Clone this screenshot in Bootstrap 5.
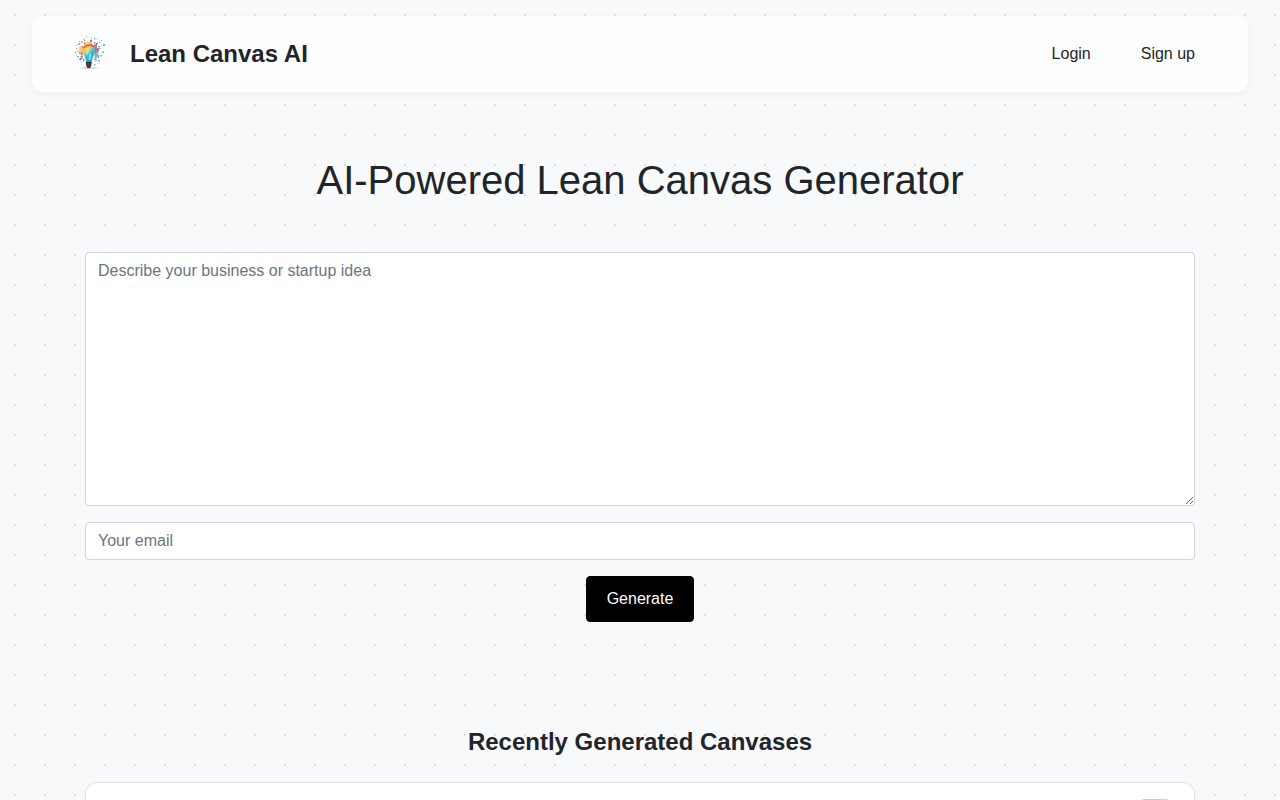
<!DOCTYPE html>
<html lang="en">
<head>
<meta charset="utf-8">
<meta name="viewport" content="width=device-width, initial-scale=1">
<title>Lean Canvas AI</title>
<link rel="stylesheet" href="https://cdn.jsdelivr.net/npm/bootstrap@5.3.0/dist/css/bootstrap.min.css">
<style>
  body {
    font-family: "Liberation Sans", Arial, sans-serif;
    background-color: #f8f9fb;
    background-image: radial-gradient(#dcdee1 1px, transparent 1px);
    background-size: 30px 30px;
    color: #212529;
  }
  .site-nav {
    margin: 16px 32px 0;
    padding: 18px 38px;
    background: #fefefe;
    border-radius: 12px;
    box-shadow: 0 2px 10px rgba(0, 0, 0, .04);
  }
  .brand-name { font-size: 24px; line-height: 36px; }
  .site-nav .nav-link { color: #212529; padding: 8px 15px; }
  .site-links { gap: 20px; }
  .page-wrap { --bs-gutter-x: 30px; }
  .hero-title { font-size: 40px; line-height: 48px; margin: 64px 0 48px; }
  .idea-form .form-control { border-color: #ced4da; border-radius: 4px; box-shadow: none; }
  .idea-form .form-control::placeholder { color: #6c757d; }
  .idea-box { height: 254px; }
  .btn-generate {
    --bs-btn-color: #fff;
    --bs-btn-bg: #000;
    --bs-btn-border-color: #000;
    --bs-btn-hover-color: #fff;
    --bs-btn-hover-bg: #222;
    --bs-btn-padding-x: 20px;
    --bs-btn-padding-y: 10px;
    --bs-btn-border-radius: 4px;
  }
  .recent-title { font-size: 24px; line-height: 28px; margin: 106px 0 26px; }
  .canvas-card {
    min-height: 120px;
    padding: 16px 24px;
    border-color: #dee2e6;
    border-radius: 12px;
    box-shadow: 0 2px 4px rgba(0, 0, 0, .05);
  }
  .card-menu { width: 30px; height: 30px; background: #fff; border: 1px solid #ccc; border-radius: 4px; }
</style>
</head>
<body>
<header class="site-nav d-flex align-items-center justify-content-between">
  <a href="#" class="d-flex align-items-center text-reset text-decoration-none">
    <svg width="40" height="40" viewBox="0 0 40 40" aria-hidden="true">
      <defs>
        <linearGradient id="glass" x1="0" y1="0" x2=".6" y2="1">
          <stop offset="0" stop-color="#ee8a42"/><stop offset=".22" stop-color="#f6c443"/>
          <stop offset=".42" stop-color="#9fd6a8"/><stop offset=".58" stop-color="#3cc3dc"/>
          <stop offset="1" stop-color="#109fc4"/>
        </linearGradient>
        <radialGradient id="floor"><stop offset="0" stop-color="#929aa3"/><stop offset="1" stop-color="#fff" stop-opacity="0"/></radialGradient>
      </defs>
      <ellipse cx="19" cy="34" rx="15" ry="1.5" fill="url(#floor)"/>
      <g opacity=".7">
        <path fill="#ed7051" d="M11 21l-2-5 2 0 0-4 3 0 1-3 3 1 3-2 2 3 3-1 0 4 3 1-3 5-6-5-6 1-2 5z"/>
        <path fill="#8a4567" d="M24 12l3-3 0 5 3 0-3 5 2 3-4 1zM12 17l-4 2 4 2-2 2 3 1z"/>
        <path fill="#5b8fc0" d="M26 18l3 0-2 3 3 1-4 2 1 3-3-1zM12 23l-2 2 3 0 0 3 2-2z"/>
        <path fill="#f6ae4c" d="M9 13l3 0-1 3 3-3 0-3 3 2 3-2-1 3-5 3-4 4z"/>
      </g>
      <path fill="url(#glass)" d="M19 11.500c-3.600 0-6.200 2.700-6.200 6.300 0 3.200 2.200 5 3 8.200l.4 2.500h5.200l.5-2.500c.8-3.200 3-5 3-8.200 0-3.600-2.500-6.300-5.900-6.300z"/>
      <path fill="none" stroke="#e5532f" stroke-width="1.400" d="M13.500 13.500q5.500-4.500 10.500-.5"/>
      <path fill="#ffe883" opacity=".6" d="M16 14.500q3-2 4 0 0 4-3 7-2-3-1-7z"/>
      <path fill="#d5f5f4" opacity=".6" d="M19.500 19q3-1 1 7h-2z"/>
      <path fill="#34262d" d="M15.800 28h6l-.6 4-1.200 2h-2.500L16.300 32z"/>
      <path stroke="#85736f" stroke-width=".6" d="M16.500 30h4.800M17 32h3.500"/>
      <g fill="#f5a24d"><path d="M8 9h2v2H8zM11 7h1.500v2H11zM14 5h1v2h-1zM6 14h1.500v1H6zM21 5h1v2h-1zM17 8h2v1h-2zM6 11h1v1H6z"/></g>
      <g fill="#e86869"><path d="M20 6h2v2h-2zM24 8h1v2h-1zM14 8h1v2h-1zM29 8h1v1h-1zM7 17h1v1H7zM9 25h1v1H9z"/></g>
      <g fill="#56c9e5"><path d="M33 10h2v2h-2zM24 4h1.500v1.500H24zM28 12h2v1.500h-2zM32 17.500h2v1.500h-2zM30 21h2v1.500h-2zM28 26h2v1.500h-2zM24 30h1.500v1.500H24zM31 6h1v1h-1zM16 2h1v1h-1zM7 22h2v1.500H7zM11 28h1v1h-1zM9 7h1v1H9zM21 3h1v1h-1z"/></g>
      <g fill="#a7dcef"><path d="M26 5h1v1h-1zM31 9h1v1h-1zM30 14h1v1h-1zM6 20h1v1H6zM25 27h1v1h-1zM29 29h1v1h-1zM13 4h1v1h-1zM10 9h1v1h-1z"/></g>
      <g fill="#985b83"><path d="M26 9h2v1h-2zM5 18h1v1H5zM28 16h1v1h-1zM10 24h1v2h-1zM28 23h1v1h-1z"/></g>
    </svg>
    <span class="brand-name fw-bold ms-3 ps-1">Lean Canvas AI</span>
  </a>
  <nav class="site-links d-flex" aria-label="Account">
    <a href="#" class="nav-link">Login</a>
    <a href="#" class="nav-link">Sign up</a>
  </nav>
</header>

<main class="container page-wrap">
  <h1 class="hero-title text-center fw-normal">AI-Powered Lean Canvas Generator</h1>
  <form class="idea-form d-flex flex-column gap-3">
    <textarea class="form-control idea-box" placeholder="Describe your business or startup idea" aria-label="Describe your business or startup idea"></textarea>
    <input type="email" class="form-control" placeholder="Your email" aria-label="Your email">
    <button type="button" class="btn btn-generate align-self-center">Generate</button>
  </form>
  <h2 class="recent-title text-center fw-bold">Recently Generated Canvases</h2>
  <article class="card canvas-card align-items-end">
    <button type="button" class="card-menu" aria-label="Open canvas"></button>
  </article>
</main>
<script src="https://cdn.jsdelivr.net/npm/bootstrap@5.3.0/dist/js/bootstrap.bundle.min.js"></script>
</body>
</html>
